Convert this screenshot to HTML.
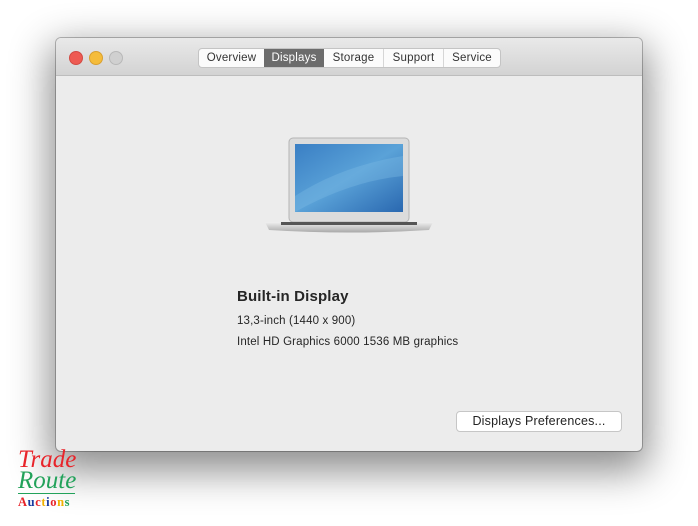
<!DOCTYPE html>
<html><head><style>
body{margin:0;width:698px;height:526px;background:#fff;position:relative;overflow:hidden;font-family:"Liberation Sans",sans-serif}
.win{position:absolute;left:56px;top:38px;width:586px;height:413px;background:#ececec;border-radius:5px;box-shadow:0 14px 40px 6px rgba(0,0,0,.45),0 0 0 1px rgba(0,0,0,.25);overflow:hidden}
.tb{position:absolute;left:0;top:0;width:586px;height:37px;background:linear-gradient(#e9e9e9,#d3d3d3);border-bottom:1px solid #bdbdbd}
.dot{position:absolute;top:13px;width:12px;height:12px;border-radius:50%}
.tabs{position:absolute;left:142px;top:10px;height:18px;display:flex;border:1px solid #c4c4c4;border-radius:4px;background:#fbfbfb;overflow:hidden;font-size:11.5px;color:#333;letter-spacing:.2px}
.tabs div{height:18px;line-height:18px;text-align:center;border-left:1px solid #d6d6d6}
.tabs div:first-child{border-left:none}
.t{position:absolute;color:#262626;letter-spacing:.15px}
.btn{position:absolute;left:400px;top:373px;width:164px;height:19px;background:#fff;border:1px solid #c6c6c6;border-radius:4px;font-size:12.5px;text-align:center;line-height:19px;color:#222;letter-spacing:.2px}
</style></head><body>
<div class="win">
 <div class="tb">
  <div class="dot" style="left:13px;background:#ee5a52;border:0.5px solid #d24a43"></div>
  <div class="dot" style="left:33px;background:#f5bc3a;border:0.5px solid #d9a030"></div>
  <div class="dot" style="left:53px;background:#d0d0d0;border:0.5px solid #b8b8b8"></div>
  <div class="tabs">
   <div style="width:65px">Overview</div>
   <div style="width:60px;background:#6c6c6c;color:#fff;border-left:none">Displays</div>
   <div style="width:59px;border-left:none">Storage</div>
   <div style="width:59px">Support</div>
   <div style="width:56px">Service</div>
  </div>
 </div>
 <svg style="position:absolute;left:205px;top:98px" width="175" height="102">
  <defs>
   <linearGradient id="s" x1="0" y1="0" x2="1" y2="1"><stop offset="0" stop-color="#3a7fc4"/><stop offset=".5" stop-color="#5aa2d8"/><stop offset="1" stop-color="#2a68b0"/></linearGradient>
   <linearGradient id="b" x1="0" y1="0" x2="0" y2="1"><stop offset="0" stop-color="#f0f0f0"/><stop offset="1" stop-color="#a8a8a8"/></linearGradient>
  </defs>
  <rect x="28" y="2" width="120" height="84" rx="4" fill="#dcdcdc" stroke="#b4b4b4"/>
  <rect x="34" y="8" width="108" height="68" fill="url(#s)"/>
  <path d="M34 60 Q80 30 142 20 L142 40 Q90 45 34 76Z" fill="#7ab8e4" opacity=".4"/>
  <path d="M4 86 L172 86 L168 94 Q88 99 8 94Z" fill="url(#b)"/>
  <rect x="20" y="86" width="136" height="3" fill="#555"/>
 </svg>
 <div class="t" style="left:181px;top:250px;font-size:15px;font-weight:bold">Built-in Display</div>
 <div class="t" style="left:181px;top:277px;font-size:11.5px">13,3-inch (1440 x 900)</div>
 <div class="t" style="left:181px;top:298px;font-size:11.5px">Intel HD Graphics 6000 1536 MB graphics</div>
 <div class="btn">Displays Preferences...</div>
</div>
<div style="position:absolute;left:18px;top:448px;font-family:'Liberation Serif',serif;font-style:italic;font-size:25px;color:#e8242a;line-height:24px">Trade</div>
<div style="position:absolute;left:18px;top:469px;font-family:'Liberation Serif',serif;font-style:italic;font-size:25px;color:#22a25a;line-height:24px">Route</div>
<div style="position:absolute;left:18px;top:493px;width:57px;height:1px;background:#22a25a"></div>
<div style="position:absolute;left:18px;top:495px;font-family:'Liberation Serif',serif;font-weight:bold;font-size:12.5px;letter-spacing:.6px"><span style="color:#e8242a">A</span><span style="color:#1a3aa0">u</span><span style="color:#e8242a">c</span><span style="color:#f0b000">t</span><span style="color:#1a3aa0">i</span><span style="color:#e8242a">o</span><span style="color:#f0b000">n</span><span style="color:#22a25a">s</span></div>
</body></html>
